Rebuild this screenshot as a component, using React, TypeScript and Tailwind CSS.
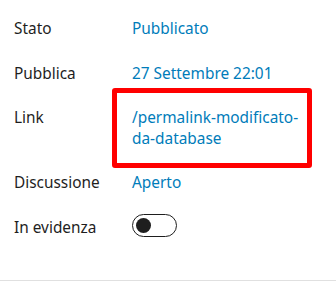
import React from "react";

function Row({ label, children, className = "" }: { label: string; children: React.ReactNode; className?: string }) {
  return (
    <div className={`flex items-start ${className}`}>
      <div className="w-[118px] shrink-0 text-[#1e1e1e]">{label}</div>
      <div className="flex-1 min-w-0">{children}</div>
    </div>
  );
}

export default function App() {
  return (
    <div
      className="w-[336px] h-[281px] bg-white border-b border-[#e0e0e0] pl-[14px] pr-[14px] pt-[19px] flex flex-col gap-[24px] text-[15.4px] leading-[20.5px]"
      style={{ fontFamily: '"Noto Sans", "Open Sans", sans-serif' }}
    >
      <Row label="Stato">
        <span className="text-[#007cba]">Pubblicato</span>
      </Row>
      <Row label="Pubblica">
        <span className="text-[#007cba]">27 Settembre 22:01</span>
      </Row>
      <Row label="Link">
        <div className="relative w-[170px]">
          <span className="text-[#007cba]">/permalink-modificato-da-database</span>
          <div className="absolute left-[-20px] right-[-10px] top-[-20px] bottom-[-19px] border-[5px] border-[#ff0000] rounded-[3px] pointer-events-none" />
        </div>
      </Row>
      <Row label="Discussione">
        <span className="text-[#007cba]">Aperto</span>
      </Row>
      <Row label="In evidenza">
        <div className="mt-[-4px] w-[45px] h-[23px] rounded-full border-[1.5px] border-[#1e1e1e] flex items-center pl-[2.5px]">
          <div className="w-[15px] h-[15px] rounded-full bg-[#1e1e1e]" />
        </div>
      </Row>
    </div>
  );
}
